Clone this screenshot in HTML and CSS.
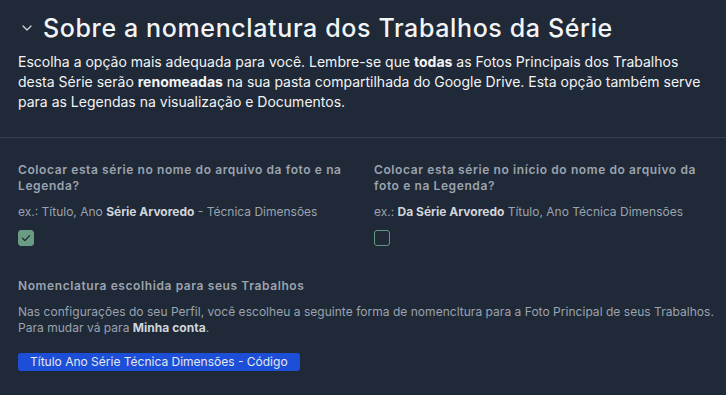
FILE: index.html
```html
<!DOCTYPE html>
<html lang="pt-BR">
<head>
<meta charset="utf-8">
<title>Sobre a nomenclatura</title>
<link rel="stylesheet" href="styles.css">
</head>
<body>
<section class="panel">
  <header class="head">
    <h2 class="title">
      <svg class="chev" width="10" height="6" viewBox="0 0 10 6" aria-hidden="true"><path d="M1 1l4 4 4-4" fill="none" stroke="#d1d5db" stroke-width="1.3" stroke-linecap="round" stroke-linejoin="round"/></svg>
      <span>Sobre a nomenclatura dos Trabalhos da Série</span>
    </h2>
    <p class="intro">Escolha a opção mais adequada para você. Lembre-se que <b>todas</b> as Fotos Principais dos Trabalhos desta Série serão <b>renomeadas</b> na sua pasta compartilhada do Google Drive. Esta opção também serve para as Legendas na visualização e Documentos.</p>
  </header>
  <div class="body">
    <div class="options">
      <div class="option">
        <div class="label">Colocar esta série no nome do arquivo da foto e na Legenda?</div>
        <div class="example">ex.: Título, Ano <b>Série Arvoredo</b> - Técnica Dimensões</div>
        <span class="check checked"><svg width="12" height="12" viewBox="0 0 12 12" aria-hidden="true"><path d="M2.5 6.3l2.4 2.3 4.6-5" fill="none" stroke="#1f2937" stroke-width="1.3" stroke-linecap="round" stroke-linejoin="round"/></svg></span>
      </div>
      <div class="option">
        <div class="label">Colocar esta série no início do nome do arquivo da foto e na Legenda?</div>
        <div class="example">ex.: <b>Da Série Arvoredo</b> Título, Ano Técnica Dimensões</div>
        <span class="check"></span>
      </div>
    </div>
    <div class="chosen">
      <div class="label">Nomenclatura escolhida para seus Trabalhos</div>
      <p class="note"><span class="nowrap">Nas configurações do seu Perfil, você escolheu a seguinte forma de nomencltura para a Foto Principal de seus Trabalhos.</span><br>Para mudar vá para <b>Minha conta</b>.</p>
      <span class="pill">Título Ano Série Técnica Dimensões - Código</span>
    </div>
  </div>
</section>
</body>
</html>
```

FILE: styles.css
```css
html, body {
  margin: 0;
  padding: 0;
  background: #1f2937;
}
body {
  font-family: Inter, "Noto Sans", sans-serif;
  color: #f3f4f6;
  width: 726px;
  height: 395px;
  overflow: hidden;
}
.panel {
  background: #1f2937;
}
.head {
  padding: 12px 18px 25px 18px;
  border-bottom: 1px solid #374151;
}
.title {
  margin: 0;
  display: flex;
  align-items: center;
  gap: 11px;
  font-size: 25px;
  line-height: 32px;
  font-weight: 500;
  letter-spacing: 0.025em;
  color: #f3f4f6;
}
.chev {
  margin-left: 4px;
  flex: none;
}
.intro {
  margin: 8px 0 0 0;
  font-size: 14px;
  line-height: 20px;
  color: #f3f4f6;
}
.intro b {
  font-weight: 700;
}
.body {
  padding: 24px 18px 0 18px;
}
.options {
  display: grid;
  grid-template-columns: 1fr 1fr;
  column-gap: 22px;
}
.option {
  display: flex;
  flex-direction: column;
  align-items: flex-start;
}
.label {
  font-size: 12px;
  line-height: 16px;
  font-weight: 600;
  letter-spacing: 0.05em;
  color: #9ca3af;
}
.example {
  margin-top: 10px;
  font-size: 12px;
  line-height: 16px;
  color: #9ca3af;
}
.example b, .note b {
  font-weight: 700;
  color: #d1d5db;
}
.check {
  margin-top: 10px;
  width: 16px;
  height: 16px;
  box-sizing: border-box;
  border: 1px solid #5f9a81;
  border-radius: 3px;
  display: flex;
  align-items: center;
  justify-content: center;
}
.check.checked {
  background: #6a9c84;
  border-color: #6a9c84;
}
.chosen {
  margin-top: 32px;
  display: flex;
  flex-direction: column;
  align-items: flex-start;
}
.note {
  margin: 10px 0 0 0;
  font-size: 12px;
  line-height: 16px;
  letter-spacing: 0.03px;
  color: #9ca3af;
}
.nowrap {
  white-space: nowrap;
}
.pill {
  margin-top: 17px;
  background: #1d4ed8;
  color: #e5e7eb;
  font-size: 12px;
  line-height: 18px;
  padding: 0 12px;
  border-radius: 3px;
}
```
